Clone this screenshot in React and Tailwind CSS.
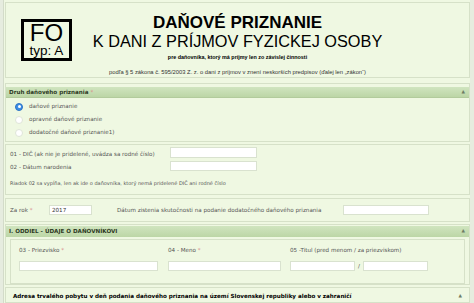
import React from 'react'

const sans = { fontFamily: '"DejaVu Sans", Verdana, sans-serif' }

function Bar({ children, className = '' }) {
  return (
    <div className={`flex items-center justify-between h-[11px] bg-linear-to-b from-[#d0e5bf] to-[#bcd6a6] border-b border-[#b2cb9c] px-[3px] ${className}`}>
      <span className="text-[5.6px] font-bold text-[#2e3a24] whitespace-nowrap">{children}</span>
      <span className="text-[4.5px] text-[#6d7c64] leading-none pr-[1px]">▲</span>
    </div>
  )
}

function Input({ className = '', value = '' }) {
  return (
    <div className={`bg-white border border-[#d9e2cf] h-[10px] flex items-center px-[2px] text-[5.6px] text-[#333] ${className}`}>
      {value}
    </div>
  )
}

function Radio({ checked, label }) {
  return (
    <div className="flex items-center gap-[6px] h-[13px]">
      {checked ? (
        <span className="w-[8px] h-[8px] rounded-full bg-[#3d8ee6] border border-[#2e74c4] flex items-center justify-center">
          <span className="w-[3px] h-[3px] rounded-full bg-white" />
        </span>
      ) : (
        <span className="w-[8px] h-[8px] rounded-full bg-white border border-[#dfe5d8]" />
      )}
      <span className="text-[5.6px] text-[#555]">{label}</span>
    </div>
  )
}

export default function App() {
  return (
    <div className="w-[474px] h-[303px] overflow-hidden bg-[#e6ecdf] pl-[3px] pr-[4px] text-[#444]" style={sans}>
      <div className="h-full bg-[#eff8e2] border-l border-[#d3dbc9] pl-[1px] flex flex-col">
        {/* header */}
        <div className="mt-[2px] h-[76px] border border-[#d6e1c8] flex flex-col" style={{ fontFamily: '"Liberation Sans", Arial, sans-serif' }}>
          <div className="grid grid-cols-[84px_1fr_84px] pt-[11px]">
            <div className="pl-[15px] pt-[5px]">
              <div className="w-[51px] h-[42px] border-[3px] border-black flex flex-col items-center justify-center text-black overflow-hidden">
                <span className="text-[24px] leading-[22px] block">FO</span>
                <span className="text-[13.5px] leading-[14px] block">typ: A</span>
              </div>
            </div>
            <div className="flex flex-col items-center text-black">
              <div className="text-[17px] font-bold leading-[18px]">DAŇOVÉ PRIZNANIE</div>
              <div className="text-[16.3px] leading-[19px] whitespace-nowrap">K DANI Z PRÍJMOV FYZICKEJ OSOBY</div>
              <div className="text-[5.4px] font-bold mt-[2px] whitespace-nowrap">pre daňovníka, ktorý má príjmy len zo závislej činnosti</div>
            </div>
            <div />
          </div>
          <div className="text-center text-[5.8px] text-[#333] mt-[7px] whitespace-nowrap">
            podľa § 5 zákona č. 595/2003 Z. z. o dani z príjmov v znení neskorších predpisov (ďalej len „zákon“)
          </div>
        </div>

        {/* druh */}
        <div className="mt-[5px] h-[59px] border border-[#d6e1c8] pt-[3px]">
          <Bar>
            Druh daňového priznania <span className="text-[#d98a8a] font-normal">*</span>
          </Bar>
          <div className="pl-[9px] pt-[2px]">
            <Radio checked label="daňové priznanie" />
            <Radio label="opravné daňové priznanie" />
            <Radio label="dodatočné daňové priznanie1)" />
          </div>
        </div>

        {/* dic */}
        <div className="mt-[2px] h-[51px] border border-[#d6e1c8] pl-[4px] pt-[2px] text-[5.6px] text-[#555]">
          <div className="flex items-end">
            <span className="w-[160px]">01 - DIČ (ak nie je pridelené, uvádza sa rodné číslo)</span>
            <Input className="w-[87px] h-[11px]" />
          </div>
          <div className="flex items-end mt-[3px]">
            <span className="w-[160px]">02 - Dátum narodenia</span>
            <Input className="w-[87px]" />
          </div>
          <div className="mt-[9px] text-[5px]">Riadok 02 sa vypĺňa, len ak ide o daňovníka, ktorý nemá pridelené DIČ ani rodné číslo</div>
        </div>

        {/* za rok */}
        <div className="mt-[3px] h-[24px] border border-[#d6e1c8] pl-[4px] flex items-center text-[5.6px] text-[#555]">
          <span className="w-[39px]">Za rok <span className="text-[#d98a8a]">*</span></span>
          <Input className="w-[43px]" value="2017" />
          <span className="ml-[25px] w-[226px]">Dátum zistenia skutočnosti na podanie dodatočného daňového priznania</span>
          <Input className="w-[86px]" />
        </div>

        {/* oddiel */}
        <div className="mt-[2px] h-[61px] border border-[#d6e1c8] pt-[1px]">
          <Bar className="border-b-0">I. ODDIEL - ÚDAJE O DAŇOVNÍKOVI</Bar>
          <div className="mx-[4px] mt-[2px] h-[45px] border border-[#d6e1c8] pl-[8px] pt-[6px] text-[5.6px] text-[#555]">
            <div className="flex">
              <div className="w-[149px]">
                <div>03 - Priezvisko <span className="text-[#d98a8a]">*</span></div>
                <Input className="w-[139px] mt-[7px]" />
              </div>
              <div className="w-[122px]">
                <div>04 - Meno <span className="text-[#d98a8a]">*</span></div>
                <Input className="w-[113px] mt-[7px]" />
              </div>
              <div>
                <div>05 -Titul (pred menom / za priezviskom)</div>
                <div className="flex items-center mt-[7px]">
                  <Input className="w-[65px]" />
                  <span className="mx-[3px]">/</span>
                  <Input className="w-[65px]" />
                </div>
              </div>
            </div>
          </div>
        </div>

        {/* adresa */}
        <div className="mt-[2px] flex-1 border border-[#d6e1c8] pt-[2px]">
          <div className="flex items-center justify-between h-[12px] px-[7px]">
            <span className="text-[5.6px] font-bold text-black whitespace-nowrap">
              Adresa trvalého pobytu v deň podania daňového priznania na území Slovenskej republiky alebo v zahraničí
            </span>
            <span className="text-[4.5px] text-[#6d7c64] leading-none">▲</span>
          </div>
        </div>
      </div>
    </div>
  )
}
